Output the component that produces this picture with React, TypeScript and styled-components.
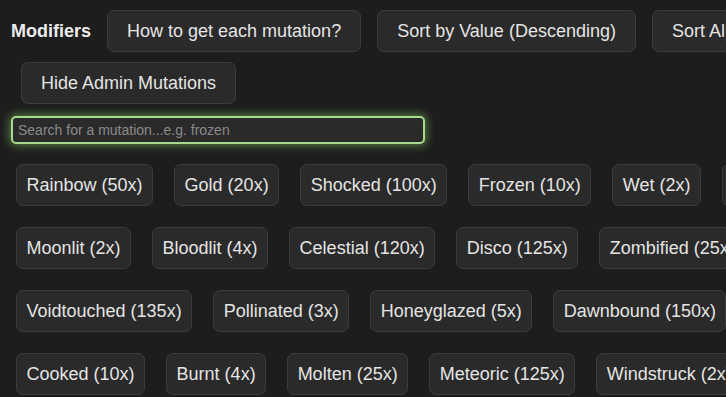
import styled, { createGlobalStyle } from 'styled-components';

const GlobalStyle = createGlobalStyle`
    html, body {
        margin: 0;
        padding: 0;
        background: #1d1d1d;
        overflow: hidden;
    }
    body {
        font-family: "Liberation Sans", Arial, sans-serif;
    }
`;

const Page = styled.div`
    width: 960px;
    padding: 0 11px 20px;
    box-sizing: border-box;
    background: #1d1d1d;
    min-height: 100vh;
`;

const Header = styled.div`
    display: flex;
    flex-wrap: wrap;
    align-items: center;
    padding: 5px 0 0 2px;
`;

const Title = styled.span`
    color: #ececec;
    font-size: 18px;
    font-weight: 700;
    margin: 0 8px 0 -2px;
`;

const ActionButton = styled.button`
    margin: 5px 8px;
    padding: 10px 19px;
    line-height: 20px;
    font-size: 18px;
    font-family: inherit;
    color: #e4e4e4;
    background: #2a2a2a;
    border: 1px solid #3c3c3c;
    border-radius: 7px;
    cursor: pointer;
`;

const Search = styled.input`
    display: block;
    width: 414px;
    height: 28px;
    box-sizing: border-box;
    margin-top: 7px;
    padding: 0 5px;
    font-size: 14px;
    font-family: inherit;
    color: #e4e4e4;
    background: #2a2a2a;
    border: 2px solid #a9d98c;
    border-radius: 5px;
    box-shadow: 0 0 8px 2px rgba(140, 205, 105, 0.5);
    outline: none;

    &::placeholder {
        color: #8a8a8a;
    }
`;

const List = styled.div`
    display: flex;
    flex-wrap: wrap;
    gap: 21px;
    padding: 20px 5px;
`;

const Chip = styled.button`
    padding: 10px 9.5px;
    line-height: 20px;
    font-size: 18px;
    font-family: inherit;
    color: #e4e4e4;
    background: #2a2a2a;
    border: 1px solid #3c3c3c;
    border-radius: 7px;
    cursor: pointer;
`;

const mutations: [string, number][] = [
    ['Rainbow', 50], ['Gold', 20], ['Shocked', 100], ['Frozen', 10], ['Wet', 2], ['Chilled', 2],
    ['Moonlit', 2], ['Bloodlit', 4], ['Celestial', 120], ['Disco', 125], ['Zombified', 25], ['Plasma', 5],
    ['Voidtouched', 135], ['Pollinated', 3], ['Honeyglazed', 5], ['Dawnbound', 150], ['Heavenly', 5],
    ['Cooked', 10], ['Burnt', 4], ['Molten', 25], ['Meteoric', 125], ['Windstruck', 2], ['Alienlike', 100],
    ['Sundried', 85], ['Verdant', 4], ['Paradisal', 18], ['Twisted', 5],
];

const App = () => {
    return (
        <>
            <GlobalStyle />
            <Page>
                <Header>
                    <Title>Modifiers</Title>
                    <ActionButton>How to get each mutation?</ActionButton>
                    <ActionButton>Sort by Value (Descending)</ActionButton>
                    <ActionButton>Sort Alphabetically</ActionButton>
                    <ActionButton>Hide Admin Mutations</ActionButton>
                </Header>
                <Search placeholder="Search for a mutation...e.g. frozen" />
                <List>
                    {mutations.map(([name, mult]) => (
                        <Chip key={name}>{name} ({mult}x)</Chip>
                    ))}
                </List>
            </Page>
        </>
    );
};

export default App;
